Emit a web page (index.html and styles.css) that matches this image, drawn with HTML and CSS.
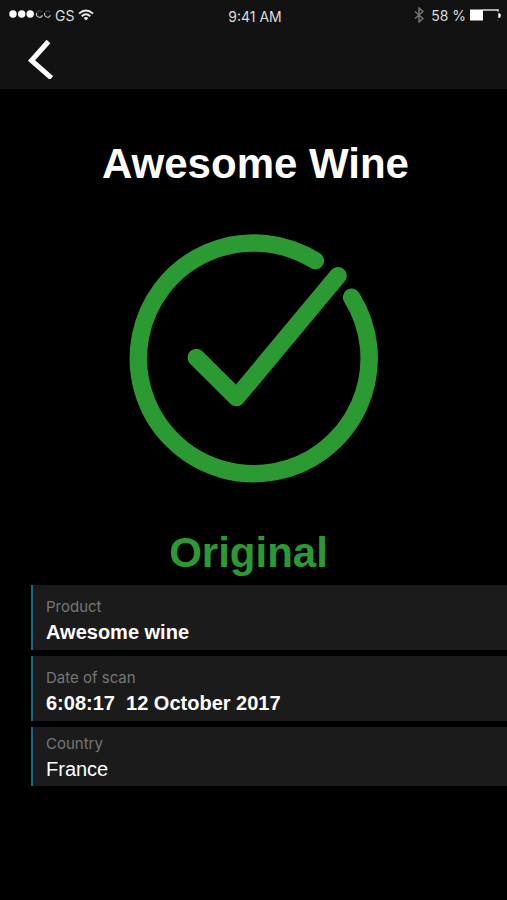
FILE: index.html
```html
<!DOCTYPE html>
<html lang="en">
<head>
<meta charset="utf-8">
<meta name="viewport" content="width=device-width, initial-scale=1">
<title>Awesome Wine</title>
<link rel="stylesheet" href="styles.css">
</head>
<body>
<header class="top">
  <div class="status">
    <div class="status-left">
      <svg class="signal" width="42" height="12" viewBox="0 0 42 12" aria-hidden="true">
        <g fill="#fff"><circle cx="4" cy="5" r="3.700"/><circle cx="12.700" cy="5" r="3.700"/><circle cx="21.200" cy="5" r="3.700"/></g>
        <g fill="none" stroke="#bbb" stroke-width="1.200"><path d="M33.500 6.200A3 3 0 0 1 27.700 4"/><path d="M41.500 6.200A3 3 0 0 1 35.700 4"/></g>
        <g fill="none" stroke="#555" stroke-width="1"><path d="M27.700 4A3 3 0 0 1 33 3"/><path d="M35.700 4A3 3 0 0 1 41 3"/></g>
      </svg>
      <span class="carrier">GS</span>
      <svg class="wifi" width="16" height="12" viewBox="0 0 16 12" aria-hidden="true">
        <g fill="none" stroke="#eee" stroke-width="1.900"><path d="M1 4.600Q8-1.800 15 4.600"/><path d="M3.700 7.300Q8 3.400 12.300 7.300"/></g>
        <path d="M5.600 9Q8 6.900 10.400 9L8 11.600Z" fill="#eee"/>
      </svg>
    </div>
    <span class="time">9:41 AM</span>
    <div class="status-right">
      <svg class="bluetooth" width="10" height="16" viewBox="0 0 10 16" aria-hidden="true">
        <path d="M1 4.500L9 11.500L5 15V1L9 4.500L1 11.500" fill="none" stroke="#777" stroke-width="1.400"/>
      </svg>
      <span class="percent">58 %</span>
      <svg class="battery" width="31" height="12" viewBox="0 0 31 12" aria-hidden="true">
        <path d="M0 .5H13V11.500H0Z" fill="#fff"/>
        <path d="M12 1H28V2.500" fill="none" stroke="#ddd" stroke-width="1.600"/>
        <path d="M28.300 4Q30.800 4 30.800 6.500T28.300 9Z" fill="#fff"/>
        <path d="M27 11H28.500" stroke="#555"/>
      </svg>
    </div>
  </div>
  <button class="back" type="button" aria-label="Back">
    <svg width="26" height="40" viewBox="0 0 26 40" aria-hidden="true">
      <path d="M21.500 2.500L4.500 21.500L24.500 39" fill="none" stroke="#fff" stroke-width="5"/>
    </svg>
  </button>
</header>
<main>
  <h1 class="headline">Awesome Wine</h1>
  <svg class="seal" width="250" height="250" viewBox="0 0 250 250" aria-hidden="true">
    <g fill="none" stroke="#2c9a32" stroke-width="17.500" stroke-linecap="round" stroke-linejoin="round">
      <path d="M186.300 26.700A115.400 115.400 0 1 0 222.700 63.300"/>
      <path d="M67.300 123.500L107.500 163.500L209 41.700"/>
    </g>
  </svg>
  <p class="headline verdict">Original</p>
  <dl class="details">
    <div class="card">
      <dt>Product</dt>
      <dd>Awesome wine</dd>
    </div>
    <div class="card">
      <dt>Date of scan</dt>
      <dd>6:08:17&nbsp; 12 October 2017</dd>
    </div>
    <div class="card card-compact">
      <dt>Country</dt>
      <dd class="light">France</dd>
    </div>
  </dl>
</main>
</body>
</html>
```

FILE: styles.css
```css
* {
  box-sizing: border-box;
}

body {
  margin: 0;
  min-height: 100vh;
  background: #000;
  color: #fff;
  font-family: "Liberation Sans", Arial, sans-serif;
}

.top {
  height: 89px;
  background: #121212;
}

.status {
  display: grid;
  grid-template-columns: 1fr auto 1fr;
  align-items: center;
  height: 30px;
  padding: 0 6px 0 9px;
  color: #ddd;
  font-family: Inter, sans-serif;
  font-size: 14px;
}

.status-left,
.status-right {
  display: flex;
  align-items: center;
}

.status-left {
  gap: 4px;
}

.status-right {
  justify-content: flex-end;
  gap: 4px;
}

.time {
  padding-top: 3px;
}

.percent {
  padding-left: 3px;
}

.back {
  display: block;
  margin: 9px 0 0 27px;
  padding: 0;
  border: 0;
  background: none;
  cursor: pointer;
}

.back svg,
.seal {
  display: block;
}

.headline {
  margin: 0;
  padding: 50px 0 0 4px;
  font-size: 42px;
  font-weight: 700;
  line-height: 50px;
  text-align: center;
}

.seal {
  margin: 45px auto 0;
}

.verdict {
  padding: 44px 10px 7px 0;
  color: #2c9a32;
}

.details {
  display: grid;
  gap: 6px;
  margin: 0 0 0 31px;
}

.card {
  padding: 11px 14px 4px 13px;
  border-left: 2px solid #176883;
  background: #1b1b1b;
}

.card-compact {
  padding-top: 6px;
  padding-bottom: 3px;
}

.card dt {
  color: #777;
  font-family: Inter, sans-serif;
  font-size: 15px;
  line-height: 22px;
}

.card dd {
  margin: 0;
  font-size: 20px;
  font-weight: 700;
  line-height: 28px;
}

.card .light {
  font-weight: 400;
}
```
